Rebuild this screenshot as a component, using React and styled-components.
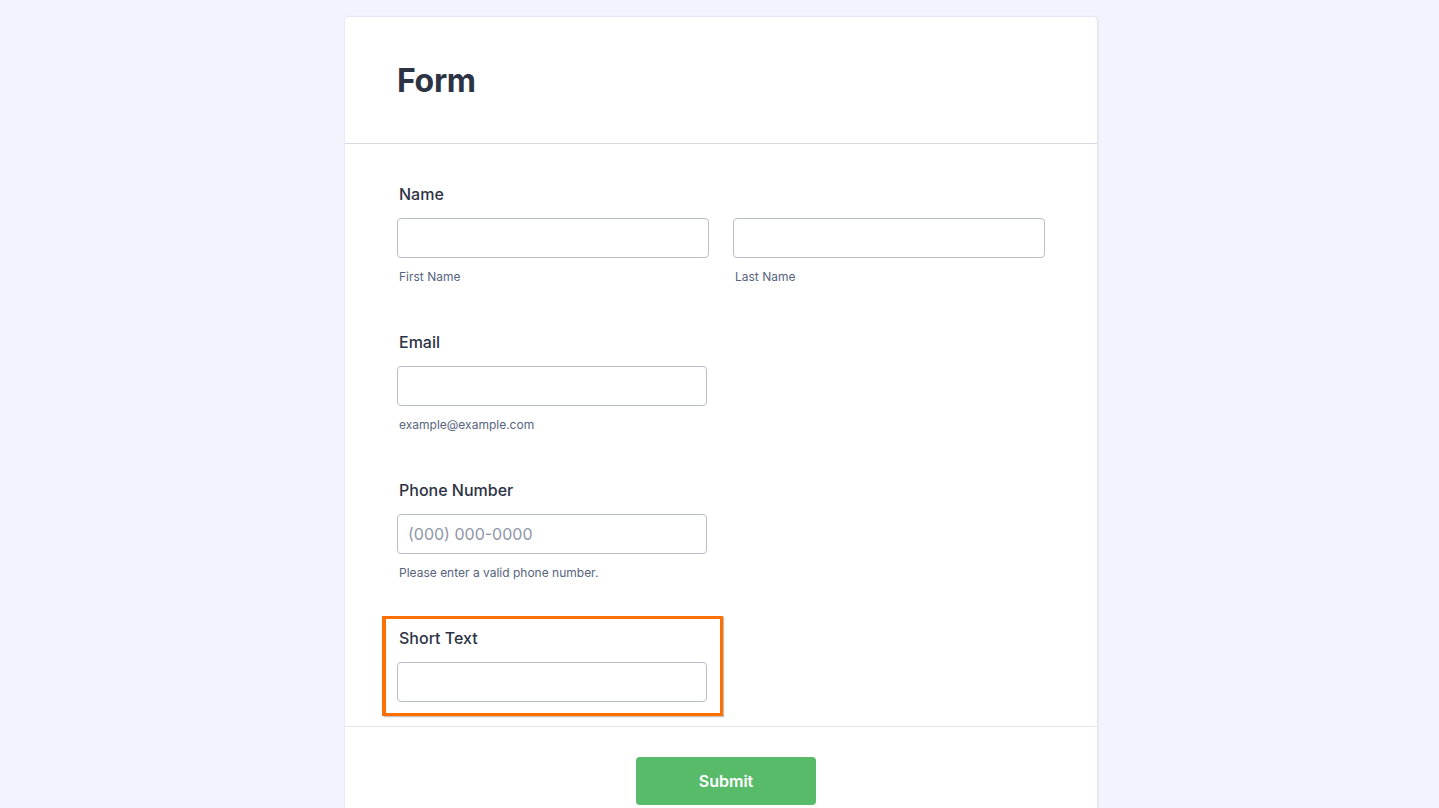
import React from "react";
import styled, { createGlobalStyle } from "styled-components";

const Global = createGlobalStyle`
  html, body { margin: 0; padding: 0; height: 100%; overflow: hidden; }
  body { background: #f3f3fe; font-family: Inter, "Noto Sans", sans-serif; color: #2c3345; }
  * { box-sizing: border-box; }
`;

const Page = styled.div`
  display: flex;
  justify-content: center;
  padding: 17px 0 0 3px;
`;

const Card = styled.div`
  width: 752px;
  background: #fff;
  border-radius: 4px 4px 0 0;
  box-shadow: 0 0 2px rgba(40, 40, 80, 0.12), 1px 0 3px rgba(40, 40, 80, 0.08);
`;

const Header = styled.div`
  height: 127px;
  display: flex;
  align-items: center;
  padding: 0 52px;
  border-bottom: 1px solid #d8dae3;
`;

const Title = styled.h1`
  margin: 0;
  font-size: 32px;
  font-weight: 700;
  color: #2c3345;
  letter-spacing: -0.3px;
`;

const Body = styled.div`
  padding: 28px 38px 10px;
  display: flex;
  flex-direction: column;
  gap: 21px;
  border-bottom: 1px solid #e4e5ee;
`;

const Field = styled.div`
  width: ${(p) => (p.$wide ? "100%" : "340px")};
  border: 3px solid ${(p) => (p.$active ? "#ff7000" : "transparent")};
  box-shadow: ${(p) =>
    p.$active ? "-1px 0 0 0 #ff7000, 1px 1px 1px rgba(80, 80, 90, 0.35)" : "none"};
  padding: 9px 11px 11px;
`;

const Label = styled.label`
  display: block;
  font-size: 16px;
  line-height: 20px;
  font-weight: 500;
  color: #2c3345;
  padding-left: 2px;
  margin-bottom: 14px;
`;

const Row = styled.div`
  display: flex;
  gap: 24px;
`;

const Col = styled.div`
  display: flex;
  flex-direction: column;
`;

const Input = styled.input`
  width: ${(p) => p.$w || 310}px;
  height: 40px;
  border: 1px solid #b8bdc9;
  border-radius: 4px;
  padding: 0 10px;
  font-family: Inter, "Noto Sans", sans-serif;
  font-size: 16px;
  color: #2c3345;
  background: #fff;
  outline: none;
  &::placeholder { color: #8f96a8; }
`;

const Sub = styled.span`
  display: block;
  margin-top: 11px;
  padding-left: 2px;
  font-size: 12px;
  line-height: 16px;
  color: #57647e;
`;

const Footer = styled.div`
  display: flex;
  justify-content: center;
  padding: 30px 0 40px 10px;
`;

const SubmitButton = styled.button`
  width: 180px;
  height: 48px;
  border: none;
  border-radius: 4px;
  background: #57bb6a;
  color: #fff;
  font-family: Inter, "Noto Sans", sans-serif;
  font-size: 16px;
  font-weight: 600;
  cursor: pointer;
`;

export default function App() {
  return (
    <>
      <Global />
      <Page>
        <Card>
          <Header>
            <Title>Form</Title>
          </Header>
          <Body>
            <Field $wide>
              <Label>Name</Label>
              <Row>
                <Col>
                  <Input $w={312} />
                  <Sub>First Name</Sub>
                </Col>
                <Col>
                  <Input $w={312} />
                  <Sub>Last Name</Sub>
                </Col>
              </Row>
            </Field>
            <Field>
              <Label>Email</Label>
              <Input />
              <Sub>example@example.com</Sub>
            </Field>
            <Field>
              <Label>Phone Number</Label>
              <Input placeholder="(000) 000-0000" />
              <Sub>Please enter a valid phone number.</Sub>
            </Field>
            <Field $active>
              <Label>Short Text</Label>
              <Input />
            </Field>
          </Body>
          <Footer>
            <SubmitButton>Submit</SubmitButton>
          </Footer>
        </Card>
      </Page>
    </>
  );
}
